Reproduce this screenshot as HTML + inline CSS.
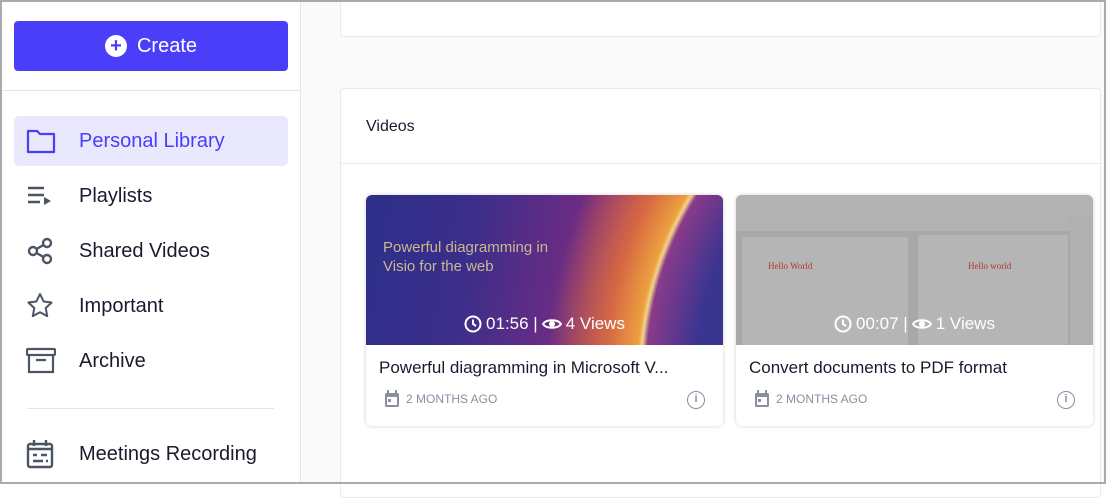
<!DOCTYPE html>
<html><head><style>
*{box-sizing:border-box;margin:0;padding:0}
body{width:1106px;height:484px;overflow:hidden;font-family:"Liberation Sans",sans-serif;background:#fff;position:relative}
.frame{position:absolute;inset:0;border:2px solid #aaa;pointer-events:none;z-index:9}
.side{position:absolute;left:0;top:0;width:301px;height:484px;background:#fff;border-right:1px solid #e6e6ef}
.create{position:absolute;left:14px;top:21px;width:274px;height:50px;background:#4a3ef8;border-radius:4px;color:#fff;font-size:20px;display:flex;align-items:center;justify-content:center;gap:10px}
.plus{width:22px;height:22px;border-radius:50%;background:#fff;color:#4a3ef8;font-size:20px;line-height:22px;text-align:center;font-weight:bold}
.hr{position:absolute;left:0;width:300px;height:1px;background:#e4e4ee}
.item{position:absolute;left:14px;width:274px;height:50px;display:flex;align-items:center;font-size:20px;color:#1a1a2e;border-radius:5px}
.item svg{position:absolute;left:12px}
.item span{position:absolute;left:65px}
.active{background:#e9e8fd;color:#4a3ef8}
.main{position:absolute;left:301px;top:0;right:0;bottom:0;background:#fafafa}
.card{position:absolute;background:#fff;border:1px solid #e8e8ee;border-radius:4px}
.vc{position:absolute;top:195px;width:357px;height:231px;background:#fff;border-radius:6px;box-shadow:0 0 4px rgba(0,0,0,.18);overflow:hidden}
.th{height:150px;position:relative}
.ov{position:absolute;bottom:11px;width:100%;display:flex;justify-content:center;align-items:center;gap:4px;color:#fff;font-size:17px}
.tt{position:absolute;left:13px;top:163px;font-size:17px;color:#1a1a2e;white-space:nowrap}
.dt{position:absolute;left:18px;top:195px;font-size:12px;color:#8a8fa0;display:flex;gap:6px;align-items:center}
.inf{position:absolute;right:18px;top:196px;width:18px;height:18px;border:1.5px solid #8a8fa0;border-radius:50%;font-size:11px;color:#8a8fa0;text-align:center;line-height:15px;font-weight:bold}
</style></head><body>
<div class="side">
<div class="create"><div class="plus">+</div>Create</div>
<div class="hr" style="top:90px"></div>
<div class="item active" style="top:116px"><svg width="30" height="26" viewBox="0 0 30 26"><path d="M2 3h9l3 3h14v18H2z" fill="none" stroke="#4a3ef8" stroke-width="2.2" stroke-linejoin="round"/></svg><span>Personal Library</span></div>
<div class="item" style="top:171px"><svg width="28" height="24" viewBox="0 0 28 24"><path d="M2 4h16M2 11h16M2 18h12" stroke="#4b5563" stroke-width="2.4"/><path d="M18 13l7 4-7 4z" fill="#4b5563"/></svg><span>Playlists</span></div>
<div class="item" style="top:226px"><svg width="28" height="28" viewBox="0 0 28 28"><circle cx="7" cy="14" r="4" fill="none" stroke="#4b5563" stroke-width="2.4"/><circle cx="21" cy="6" r="4" fill="none" stroke="#4b5563" stroke-width="2.4"/><circle cx="21" cy="22" r="4" fill="none" stroke="#4b5563" stroke-width="2.4"/><path d="M10.5 12l7-4M10.5 16l7 4" stroke="#4b5563" stroke-width="2.4"/></svg><span>Shared Videos</span></div>
<div class="item" style="top:281px"><svg width="28" height="28" viewBox="0 0 28 28"><path d="M14 2l3.6 7.5 8 1-5.9 5.6 1.5 8L14 20.2l-7.2 3.9 1.5-8-5.9-5.6 8-1z" fill="none" stroke="#4b5563" stroke-width="2" stroke-linejoin="round"/></svg><span>Important</span></div>
<div class="item" style="top:336px"><svg width="30" height="28" viewBox="0 0 30 28"><rect x="1" y="2" width="28" height="6" rx="1" fill="none" stroke="#4b5563" stroke-width="2.2"/><path d="M3 8v17h24V8M10 13h10" fill="none" stroke="#4b5563" stroke-width="2.2"/></svg><span>Archive</span></div>
<div class="hr" style="top:408px;left:27px;width:247px"></div>
<div class="item" style="top:429px"><svg width="28" height="30" viewBox="0 0 28 30"><rect x="2" y="5" width="24" height="23" rx="2" fill="none" stroke="#4b5563" stroke-width="2.4"/><path d="M2 10h24M8 1v6M20 1v6M7 16h4M15 16h6M7 22h10M20 22h2" stroke="#4b5563" stroke-width="2.4"/></svg><span>Meetings Recording</span></div>
</div>
<div class="main">
<div class="card" style="left:39px;top:-5px;width:761px;height:42px"></div>
<div class="card" style="left:39px;top:88px;width:761px;height:410px">
<div style="position:absolute;left:25px;top:29px;font-size:16px;color:#1a1a2e">Videos</div>
<div style="position:absolute;left:0;right:0;top:74px;height:1px;background:#e8e8ee"></div>
</div>
<div class="vc" style="left:65px">
<div class="th" style="background:radial-gradient(circle at 620px 180px,#2a3c8e 0,#3a3590 290px,#8a3a8a 340px,#f2d488 345px,#eda040 349px,rgba(220,110,60,.9) 380px,rgba(160,50,110,0) 440px),linear-gradient(100deg,#2c2f8a 0%,#3c2e8a 30%,#6a2c84 55%,#a03474 75%)">
<div style="position:absolute;left:17px;top:43px;color:#c9b98f;font-size:15px;line-height:19px">Powerful diagramming in<br>Visio for the web</div>
<div class="ov"><svg width="18" height="18" viewBox="0 0 18 18"><circle cx="9" cy="9" r="7.5" fill="none" stroke="#fff" stroke-width="2"/><path d="M9 4.5V9l3 2" fill="none" stroke="#fff" stroke-width="2"/></svg>01:56 | <svg width="20" height="16" viewBox="0 0 20 16"><path d="M1 8c3-5 15-5 18 0-3 5-15 5-18 0z" fill="none" stroke="#fff" stroke-width="2"/><circle cx="10" cy="8" r="3" fill="#fff"/></svg>4 Views</div></div>
<div class="tt">Powerful diagramming in Microsoft V...</div>
<div class="dt"><svg width="16" height="18" viewBox="0 0 16 18"><rect x="1" y="3" width="14" height="14" rx="1.5" fill="#8a8fa0"/><rect x="3" y="7" width="10" height="8" fill="#fff"/><rect x="4" y="9" width="3" height="3" fill="#8a8fa0"/><path d="M4 0v4M12 0v4" stroke="#8a8fa0" stroke-width="2"/></svg>2 MONTHS AGO</div><div class="inf">i</div>
</div>
<div class="vc" style="left:435px">
<div class="th" style="background:#a8a8a8">
<div style="position:absolute;left:0;top:0;width:100%;height:36px;background:#b2b2b2"></div>
<div style="position:absolute;left:6px;top:42px;width:166px;height:108px;background:#b5b5b5"></div>
<div style="position:absolute;left:182px;top:40px;width:150px;height:110px;background:#b5b5b5"></div>
<div style="position:absolute;left:334px;top:20px;width:23px;height:130px;background:#b0b0b0"></div>
<div style="position:absolute;left:32px;top:66px;color:#b5342f;font-size:9px;font-family:'Liberation Serif',serif">Hello World</div>
<div style="position:absolute;left:232px;top:66px;color:#b5342f;font-size:9px;font-family:'Liberation Serif',serif">Hello world</div>
<div class="ov"><svg width="18" height="18" viewBox="0 0 18 18"><circle cx="9" cy="9" r="7.5" fill="none" stroke="#fff" stroke-width="2"/><path d="M9 4.5V9l3 2" fill="none" stroke="#fff" stroke-width="2"/></svg>00:07 | <svg width="20" height="16" viewBox="0 0 20 16"><path d="M1 8c3-5 15-5 18 0-3 5-15 5-18 0z" fill="none" stroke="#fff" stroke-width="2"/><circle cx="10" cy="8" r="3" fill="#fff"/></svg>1 Views</div></div>
<div class="tt">Convert documents to PDF format</div>
<div class="dt"><svg width="16" height="18" viewBox="0 0 16 18"><rect x="1" y="3" width="14" height="14" rx="1.5" fill="#8a8fa0"/><rect x="3" y="7" width="10" height="8" fill="#fff"/><rect x="4" y="9" width="3" height="3" fill="#8a8fa0"/><path d="M4 0v4M12 0v4" stroke="#8a8fa0" stroke-width="2"/></svg>2 MONTHS AGO</div><div class="inf">i</div>
</div>
</div>
<div class="frame"></div>
</body></html>
